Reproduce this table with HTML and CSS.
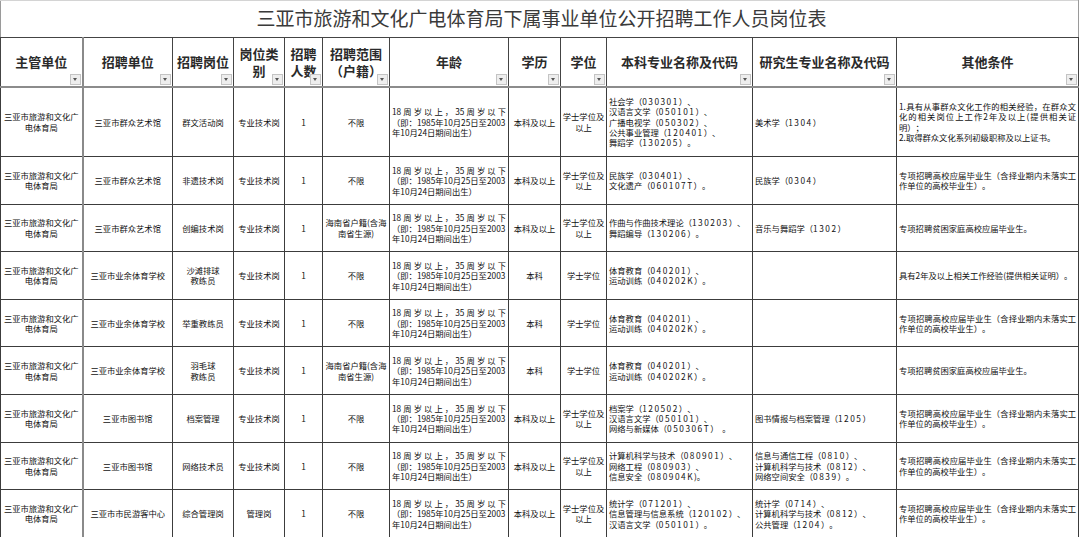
FILE: index.html
```html
<!DOCTYPE html>
<html lang="zh-CN">
<head>
<meta charset="utf-8">
<title>三亚市旅游和文化广电体育局下属事业单位公开招聘工作人员岗位表</title>
<link rel="stylesheet" href="styles.css">
</head>
<body>
<table class="sheet">
  <colgroup>
    <col class="c1"><col class="c2"><col class="c3"><col class="c4"><col class="c5"><col class="c6">
    <col class="c7"><col class="c8"><col class="c9"><col class="c10"><col class="c11"><col class="c12">
  </colgroup>
  <thead>
    <tr class="title-row"><th colspan="12" class="title">三亚市旅游和文化广电体育局下属事业单位公开招聘工作人员岗位表</th></tr>
    <tr class="head-row">
      <th>主管单位<span class="filter"></span></th>
      <th>招聘单位<span class="filter"></span></th>
      <th>招聘岗位<span class="filter"></span></th>
      <th>岗位类<br>别<span class="filter"></span></th>
      <th>招聘<br>人数<span class="filter"></span></th>
      <th>招聘范围<br>（户籍）<span class="filter"></span></th>
      <th>年龄<span class="filter"></span></th>
      <th>学历<span class="filter"></span></th>
      <th>学位<span class="filter"></span></th>
      <th>本科专业名称及代码<span class="filter"></span></th>
      <th>研究生专业名称及代码<span class="filter"></span></th>
      <th>其他条件<span class="filter"></span></th>
    </tr>
  </thead>
  <tbody>
    <tr class="r-tall">
      <td>三亚市旅游和文化广<br>电体育局</td>
      <td>三亚市群众艺术馆</td>
      <td>群文活动岗</td>
      <td>专业技术岗</td>
      <td>1</td>
      <td>不限</td>
      <td class="left"><span class="jl">18周岁以上，35周岁以下</span>（即：1985年10月25日至2003<br>年10月24日期间出生）</td>
      <td>本科及以上</td>
      <td>学士学位及<br>以上</td>
      <td class="left">社会学（<span class="code">030301</span>）、<br>汉语言文学（<span class="code">050101</span>）、<br>广播电视学（<span class="code">050302</span>）、<br>公共事业管理（<span class="code">120401</span>）、<br>舞蹈学（<span class="code">130205</span>）。</td>
      <td class="left">美术学（<span class="code">1304</span>）</td>
      <td class="left"><span class="jl">1.具有从事群众文化工作的相关经验，在群众文</span><span class="jl">化的相关岗位上工作2年及以上(提供相关证</span>明）；<br>2.取得群众文化系列初级职称及以上证书。</td>
    </tr>
    <tr>
      <td>三亚市旅游和文化广<br>电体育局</td>
      <td>三亚市群众艺术馆</td>
      <td>非遗技术岗</td>
      <td>专业技术岗</td>
      <td>1</td>
      <td>不限</td>
      <td class="left"><span class="jl">18周岁以上，35周岁以下</span>（即：1985年10月25日至2003<br>年10月24日期间出生）</td>
      <td>本科及以上</td>
      <td>学士学位及<br>以上</td>
      <td class="left">民族学（<span class="code">030401</span>）、<br>文化遗产（<span class="code">060107T</span>）。</td>
      <td class="left">民族学（<span class="code">0304</span>）</td>
      <td class="left"><span class="jl">专项招聘高校应届毕业生（含择业期内未落实工</span>作单位的高校毕业生）。</td>
    </tr>
    <tr>
      <td>三亚市旅游和文化广<br>电体育局</td>
      <td>三亚市群众艺术馆</td>
      <td>创编技术岗</td>
      <td>专业技术岗</td>
      <td>1</td>
      <td>海南省户籍(含海<br>南省生源)</td>
      <td class="left"><span class="jl">18周岁以上，35周岁以下</span>（即：1985年10月25日至2003<br>年10月24日期间出生）</td>
      <td>本科及以上</td>
      <td>学士学位及<br>以上</td>
      <td class="left">作曲与作曲技术理论（<span class="code">130203</span>）、<br>舞蹈编导（<span class="code">130206</span>）。</td>
      <td class="left">音乐与舞蹈学（<span class="code">1302</span>）</td>
      <td class="left">专项招聘贫困家庭高校应届毕业生。</td>
    </tr>
    <tr>
      <td>三亚市旅游和文化广<br>电体育局</td>
      <td>三亚市业余体育学校</td>
      <td>沙滩排球<br>教练员</td>
      <td>专业技术岗</td>
      <td>1</td>
      <td>不限</td>
      <td class="left"><span class="jl">18周岁以上，35周岁以下</span>（即：1985年10月25日至2003<br>年10月24日期间出生）</td>
      <td>本科</td>
      <td>学士学位</td>
      <td class="left">体育教育（<span class="code">040201</span>）、<br>运动训练（<span class="code">040202K</span>）。</td>
      <td class="left"></td>
      <td class="left">具有2年及以上相关工作经验(提供相关证明）。</td>
    </tr>
    <tr>
      <td>三亚市旅游和文化广<br>电体育局</td>
      <td>三亚市业余体育学校</td>
      <td>举重教练员</td>
      <td>专业技术岗</td>
      <td>1</td>
      <td>不限</td>
      <td class="left"><span class="jl">18周岁以上，35周岁以下</span>（即：1985年10月25日至2003<br>年10月24日期间出生）</td>
      <td>本科</td>
      <td>学士学位</td>
      <td class="left">体育教育（<span class="code">040201</span>）、<br>运动训练（<span class="code">040202K</span>）。</td>
      <td class="left"></td>
      <td class="left"><span class="jl">专项招聘高校应届毕业生（含择业期内未落实工</span>作单位的高校毕业生）。</td>
    </tr>
    <tr>
      <td>三亚市旅游和文化广<br>电体育局</td>
      <td>三亚市业余体育学校</td>
      <td>羽毛球<br>教练员</td>
      <td>专业技术岗</td>
      <td>1</td>
      <td>海南省户籍(含海<br>南省生源)</td>
      <td class="left"><span class="jl">18周岁以上，35周岁以下</span>（即：1985年10月25日至2003<br>年10月24日期间出生）</td>
      <td>本科</td>
      <td>学士学位</td>
      <td class="left">体育教育（<span class="code">040201</span>）、<br>运动训练（<span class="code">040202K</span>）。</td>
      <td class="left"></td>
      <td class="left">专项招聘贫困家庭高校应届毕业生。</td>
    </tr>
    <tr>
      <td>三亚市旅游和文化广<br>电体育局</td>
      <td>三亚市图书馆</td>
      <td>档案管理</td>
      <td>专业技术岗</td>
      <td>1</td>
      <td>不限</td>
      <td class="left"><span class="jl">18周岁以上，35周岁以下</span>（即：1985年10月25日至2003<br>年10月24日期间出生）</td>
      <td>本科及以上</td>
      <td>学士学位及<br>以上</td>
      <td class="left">档案学（<span class="code">120502</span>）、<br>汉语言文学（<span class="code">050101</span>）、<br>网络与新媒体（<span class="code">050306T</span>） &nbsp;。</td>
      <td class="left">图书情报与档案管理（<span class="code">1205</span>）</td>
      <td class="left"><span class="jl">专项招聘高校应届毕业生（含择业期内未落实工</span>作单位的高校毕业生）。</td>
    </tr>
    <tr>
      <td>三亚市旅游和文化广<br>电体育局</td>
      <td>三亚市图书馆</td>
      <td>网络技术员</td>
      <td>专业技术岗</td>
      <td>1</td>
      <td>不限</td>
      <td class="left"><span class="jl">18周岁以上，35周岁以下</span>（即：1985年10月25日至2003<br>年10月24日期间出生）</td>
      <td>本科及以上</td>
      <td>学士学位及<br>以上</td>
      <td class="left">计算机科学与技术（<span class="code">080901</span>）、<br>网络工程（<span class="code">080903</span>）、<br>信息安全（<span class="code">080904K</span>)。</td>
      <td class="left">信息与通信工程（<span class="code">0810</span>）、<br>计算机科学与技术（<span class="code">0812</span>）、<br>网络空间安全（<span class="code">0839</span>）。</td>
      <td class="left"><span class="jl">专项招聘高校应届毕业生（含择业期内未落实工</span>作单位的高校毕业生）。</td>
    </tr>
    <tr>
      <td>三亚市旅游和文化广<br>电体育局</td>
      <td>三亚市市民游客中心</td>
      <td>综合管理岗</td>
      <td>管理岗</td>
      <td>1</td>
      <td>不限</td>
      <td class="left"><span class="jl">18周岁以上，35周岁以下</span>（即：1985年10月25日至2003<br>年10月24日期间出生）</td>
      <td>本科及以上</td>
      <td>学士学位及<br>以上</td>
      <td class="left">统计学（<span class="code">071201</span>）、<br>信息管理与信息系统（<span class="code">120102</span>）、<br>汉语言文学（<span class="code">050101</span>）。</td>
      <td class="left">统计学（<span class="code">0714</span>）、<br>计算机科学与技术（<span class="code">0812</span>）、<br>公共管理（<span class="code">1204</span>）。</td>
      <td class="left"><span class="jl">专项招聘高校应届毕业生（含择业期内未落实工</span>作单位的高校毕业生）。</td>
    </tr>
  </tbody>
</table>
</body>
</html>
```

FILE: styles.css
```css
html, body {
  margin: 0;
  padding: 0;
  background: #ffffff;
}

.sheet {
  border-collapse: collapse;
  table-layout: fixed;
  width: 1079px;
  font-family: "Noto Sans CJK SC", "Noto Sans", sans-serif;
  color: #111;
  text-spacing-trim: space-all;
}

.c1 { width: 82px; }
.c2 { width: 90px; }
.c3 { width: 61px; }
.c4 { width: 51px; }
.c5 { width: 38px; }
.c6 { width: 67px; }
.c7 { width: 119px; }
.c8 { width: 52px; }
.c9 { width: 46px; }
.c10 { width: 146px; }
.c11 { width: 144px; }
.c12 { width: 182px; }

.title-row { height: 37px; }

.title {
  border-top: 1px solid #d4d4d4;
  border-left: 1px solid #9a9a9a;
  border-right: 1px solid #9a9a9a;
  border-bottom: 1px solid #444;
  font-size: 19px;
  font-weight: normal;
  color: #3a3a3a;
  text-align: center;
  padding: 0 0 2px 4px;
  line-height: 22px;
}

.head-row { height: 49px; }

.head-row th {
  position: relative;
  border: 1px solid #444;
  border-bottom: 2px solid #8c8c8c;
  font-size: 13px;
  font-weight: bold;
  color: #2a2a2a;
  line-height: 17px;
  text-align: center;
  vertical-align: middle;
  padding: 0 2px;
}

.head-row th:first-child {
  border-right: 2px solid #8a8a8a;
}

.filter {
  position: absolute;
  right: 1px;
  bottom: 1px;
  width: 9px;
  height: 9px;
  background: #eeeeee;
  border: 1px solid #c4c4c4;
  box-sizing: content-box;
}

.filter::after {
  content: "";
  position: absolute;
  left: 2px;
  top: 3px;
  border-top: 3px solid #555;
  border-left: 2.5px solid transparent;
  border-right: 2.5px solid transparent;
}

tbody tr { height: 47.6px; }
tbody tr.r-tall { height: 70px; }

tbody td {
  border: 1px solid #3c3c3c;
  font-size: 8.3px;
  line-height: 10.4px;
  text-align: center;
  vertical-align: middle;
  padding: 0 1px;
  overflow: hidden;
}

tbody td:first-child {
  border-right: 2px solid #8a8a8a;
}

tbody td.left {
  text-align: left;
  padding: 0 2px 0 2px;
}

.code {
  letter-spacing: 1.5px;
}

.jl {
  display: block;
  text-align: justify;
  text-align-last: justify;
}
```
